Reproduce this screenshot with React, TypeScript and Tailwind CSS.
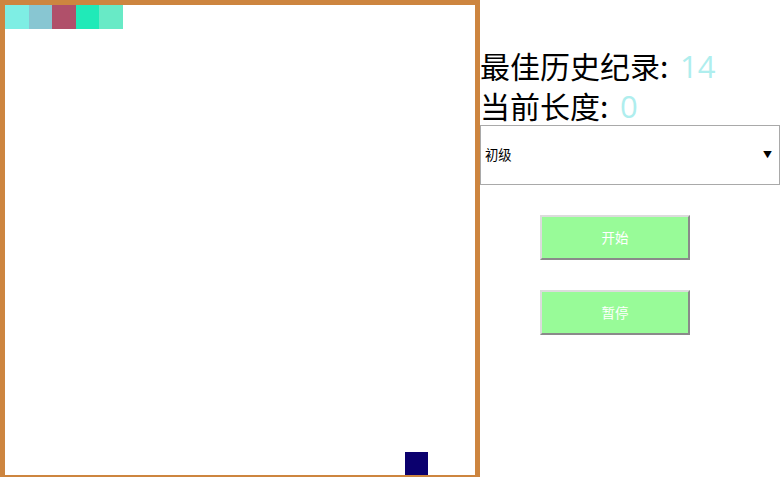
import React from 'react';

const snake = [
  { x: 0, y: 0, color: '#7eeee4' },
  { x: 1, y: 0, color: '#88c6d2' },
  { x: 2, y: 0, color: '#b0506a' },
  { x: 3, y: 0, color: '#20eab8' },
  { x: 4, y: 0, color: '#68eac6' },
];

const food = { x: 17, y: 19, color: '#0b006e' };

export default function App() {
  return (
    <div className="flex w-[780px] h-[477px] overflow-hidden bg-white font-['Noto_Sans_CJK_SC','Noto_Sans',sans-serif]">
      {/* Board */}
      <div className="w-[480px] h-[480px] shrink-0 border-[5px] border-[#cd853f] bg-white">
        <div className="grid grid-cols-[repeat(20,23.5px)] grid-rows-[repeat(20,23.5px)] w-[470px] h-[470px]">
          {snake.map((c, i) => (
            <div
              key={i}
              style={{ gridColumn: c.x + 1, gridRow: c.y + 1, backgroundColor: c.color }}
            />
          ))}
          <div style={{ gridColumn: food.x + 1, gridRow: food.y + 1, backgroundColor: food.color }} />
        </div>
      </div>

      {/* Side panel */}
      <div className="w-[300px] pt-[45px] flex flex-col">
        <div className="h-[40px] text-[30px] leading-[40px] text-black whitespace-nowrap">
          最佳历史纪录:{' '}
          <span className="ml-[5px] font-['Open_Sans',sans-serif] text-[31px] leading-none text-[#afeeee]">14</span>
        </div>
        <div className="h-[40px] text-[30px] leading-[40px] text-black whitespace-nowrap">
          当前长度:{' '}
          <span className="ml-[5px] font-['Open_Sans',sans-serif] text-[31px] leading-none text-[#afeeee]">0</span>
        </div>
        <div className="relative">
          <select
            defaultValue="初级"
            className="w-[300px] h-[60px] appearance-none border border-[#a9a9a9] bg-white pl-[4px] text-[13.33px] text-black outline-none"
          >
            <option>初级</option>
            <option>中级</option>
            <option>高级</option>
          </select>
          <span className="absolute right-[8px] top-[25px] text-[9px] leading-none text-black pointer-events-none">▼</span>
        </div>
        <div className="flex flex-col gap-[30px] mt-[30px] pl-[60px]">
          <button className="w-[150px] h-[45px] bg-[#98fb98] border-2 border-t-[#dcdcdc] border-l-[#dcdcdc] border-b-[#8a8a8a] border-r-[#8a8a8a] text-white text-[13.5px]">
            开始
          </button>
          <button className="w-[150px] h-[45px] bg-[#98fb98] border-2 border-t-[#dcdcdc] border-l-[#dcdcdc] border-b-[#8a8a8a] border-r-[#8a8a8a] text-white text-[13.5px]">
            暂停
          </button>
        </div>
      </div>
    </div>
  );
}
